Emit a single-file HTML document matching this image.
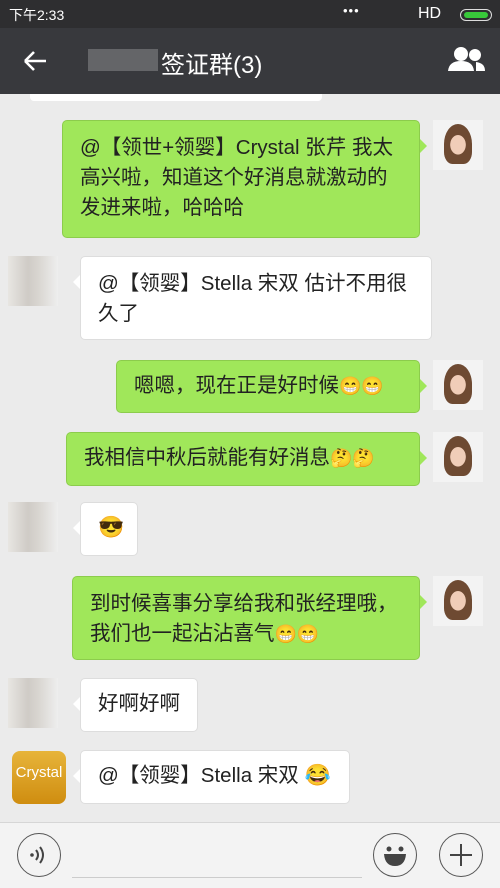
<!DOCTYPE html>
<html><head><meta charset="utf-8"><style>
*{margin:0;padding:0;box-sizing:border-box}
body{width:500px;height:888px;overflow:hidden;background:#ebebeb;font-family:"Liberation Sans","Noto Sans CJK SC",sans-serif;position:relative;color:#222}
.sb{position:absolute;left:0;top:0;width:500px;height:28px;background:#2e2e30;color:#fff;font-size:14px}
.hd{position:absolute;left:0;top:28px;width:500px;height:66px;background:#38393d;color:#fff}
.b{position:absolute;font-size:20.5px;line-height:30px;padding:12px 0 0 17px;border-radius:5px;white-space:nowrap;overflow:visible}
.g{background:#a0e75a;border:1px solid #8ccc4c}
.w{background:#fff;border:1px solid #ddd}
.g:after{content:"";position:absolute;right:-8px;top:18px;border:7px solid transparent;border-left-color:#a0e75a;border-right:0}
.w:before{content:"";position:absolute;left:-8px;top:18px;border:7px solid transparent;border-right-color:#fff;border-left:0}
.av{position:absolute;width:50px;height:50px}
.me{left:433px;background:#f3f3f3;overflow:hidden}
.me:after{content:"";position:absolute;left:11px;top:4px;width:28px;height:40px;border-radius:50% 50% 30% 30%;background:radial-gradient(ellipse 8px 10px at 50% 52%,#f0cdb8 0 95%,#6e4a32 100%)}
.ot{left:8px;background:linear-gradient(90deg,#e8e6e2,#cfcbc6 40%,#d8d5d0 60%,#eee)}
.ci{position:absolute;border:1.5px solid #555;border-radius:50%;width:44px;height:44px;top:833px}
.e{font-size:18px}
</style></head><body>
<div class="sb"><span style="position:absolute;left:9px;top:5px">下午2:33</span><span style="position:absolute;left:343px;top:3px;font-size:13px;letter-spacing:1px">•••</span><span style="position:absolute;left:418px;top:5px;font-size:16px">HD</span><span style="position:absolute;left:460px;top:9px;width:32px;height:12px;border:1px solid #ddd;border-radius:6px"><span style="position:absolute;left:3px;top:2px;width:24px;height:6px;background:#38c83a;border-radius:3px"></span></span></div>
<div class="hd">
<svg style="position:absolute;left:22px;top:22px" width="26" height="22"><path d="M3 11H24M3 11L12 2M3 11L12 20" stroke="#fff" stroke-width="2.6" fill="none"/></svg>
<div style="position:absolute;left:88px;top:21px;width:70px;height:22px;background:#77777a;opacity:.7"></div>
<span style="position:absolute;left:161px;top:17px;font-size:24px">签证群(3)</span>
<svg style="position:absolute;left:447px;top:17px" width="40" height="30"><circle cx="14" cy="9" r="7" fill="#fff"/><path d="M1 26Q2 16 14 16Q26 16 27 26Z" fill="#fff"/><circle cx="28" cy="10" r="6" fill="#fff"/><path d="M29 17Q38 18 38 26H29Z" fill="#fff"/></svg>
</div>
<div style="position:absolute;left:30px;top:94px;width:292px;height:7px;background:#fff;border-radius:0 0 4px 4px"></div>

<div class="b g" style="left:62px;top:120px;width:358px;height:118px">@【领世+领婴】Crystal 张芹 我太<br>高兴啦，知道这个好消息就激动的<br>发进来啦，哈哈哈</div>
<div class="av me" style="top:120px"></div>

<div class="av ot" style="top:256px"></div>
<div class="b w" style="left:80px;top:256px;width:352px;height:84px">@【领婴】Stella 宋双 估计不用很<br>久了</div>

<div class="b g" style="left:116px;top:360px;width:304px;height:53px;padding-top:10px">嗯嗯，现在正是好时候<span class="e">😁😁</span></div>
<div class="av me" style="top:360px"></div>

<div class="b g" style="left:66px;top:432px;width:354px;height:54px;padding-top:10px">我相信中秋后就能有好消息<span class="e">🤔🤔</span></div>
<div class="av me" style="top:432px"></div>

<div class="av ot" style="top:502px"></div>
<div class="b w" style="left:80px;top:502px;width:58px;height:54px;padding-top:10px"><span class="e" style="font-size:21px">😎</span></div>

<div class="b g" style="left:72px;top:576px;width:348px;height:84px">到时候喜事分享给我和张经理哦，<br>我们也一起沾沾喜气<span class="e">😁😁</span></div>
<div class="av me" style="top:576px"></div>

<div class="av ot" style="top:678px"></div>
<div class="b w" style="left:80px;top:678px;width:118px;height:54px;padding-top:10px">好啊好啊</div>

<div class="av" style="left:12px;top:751px;width:54px;height:53px;border-radius:8px;background:linear-gradient(#e7b43a,#cf8d10);color:#fff;font-size:15px;text-align:center;line-height:44px">Crystal</div>
<div class="b w" style="left:80px;top:750px;width:270px;height:54px;padding-top:10px">@【领婴】Stella 宋双 <span class="e" style="font-size:21px">😂</span></div>

<div style="position:absolute;left:0;top:822px;width:500px;height:66px;background:#f3f3f3;border-top:1px solid #d6d6d6"></div>
<div style="position:absolute;left:72px;top:877px;width:290px;height:1px;background:#ccc"></div>
<div class="ci" style="left:17px"></div>
<svg style="position:absolute;left:28px;top:845px" width="20" height="20"><circle cx="4" cy="10" r="1.8" fill="#444"/><path d="M8 5Q12 10 8 15M12 2Q18 10 12 18" stroke="#444" stroke-width="2" fill="none"/></svg>
<div class="ci" style="left:373px"></div>
<svg style="position:absolute;left:380px;top:840px" width="30" height="30"><circle cx="9" cy="9" r="2.5" fill="#444"/><circle cx="21" cy="9" r="2.5" fill="#444"/><path d="M4 14H26Q25 26 15 26Q5 26 4 14Z" fill="#444"/></svg>
<div class="ci" style="left:439px"></div>
<svg style="position:absolute;left:448px;top:842px" width="26" height="26"><path d="M13 2V24M2 13H24" stroke="#444" stroke-width="2"/></svg>
</body></html>
